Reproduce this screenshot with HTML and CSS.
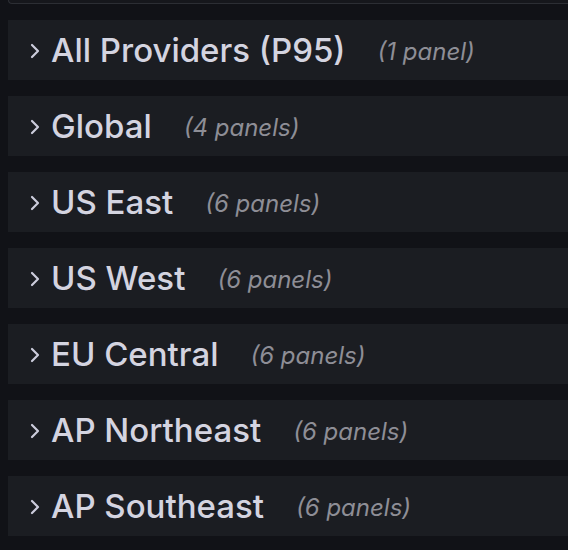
FILE: index.html
```html
<!DOCTYPE html>
<html lang="en">
<head>
  <meta charset="UTF-8">
  <title>Dashboard rows</title>
  <link rel="stylesheet" href="styles.css">
</head>
<body>
  <div class="panel-edge"></div>
  <div class="rows">
    <div class="row">
      <svg class="chevron" viewBox="0 0 10 16"><path d="M2 2 L8 8 L2 14"/></svg>
      <span class="title">All Providers (P95)</span>
      <span class="count">(1 panel)</span>
    </div>
    <div class="row">
      <svg class="chevron" viewBox="0 0 10 16"><path d="M2 2 L8 8 L2 14"/></svg>
      <span class="title">Global</span>
      <span class="count">(4 panels)</span>
    </div>
    <div class="row">
      <svg class="chevron" viewBox="0 0 10 16"><path d="M2 2 L8 8 L2 14"/></svg>
      <span class="title">US East</span>
      <span class="count">(6 panels)</span>
    </div>
    <div class="row">
      <svg class="chevron" viewBox="0 0 10 16"><path d="M2 2 L8 8 L2 14"/></svg>
      <span class="title">US West</span>
      <span class="count">(6 panels)</span>
    </div>
    <div class="row">
      <svg class="chevron" viewBox="0 0 10 16"><path d="M2 2 L8 8 L2 14"/></svg>
      <span class="title">EU Central</span>
      <span class="count">(6 panels)</span>
    </div>
    <div class="row">
      <svg class="chevron" viewBox="0 0 10 16"><path d="M2 2 L8 8 L2 14"/></svg>
      <span class="title">AP Northeast</span>
      <span class="count">(6 panels)</span>
    </div>
    <div class="row">
      <svg class="chevron" viewBox="0 0 10 16"><path d="M2 2 L8 8 L2 14"/></svg>
      <span class="title">AP Southeast</span>
      <span class="count">(6 panels)</span>
    </div>
  </div>
</body>
</html>
```

FILE: styles.css
```css
*{
  padding: 0;
  margin: 0;
  box-sizing: border-box;
}
body{
  background-color: #111217;
  font-family: Inter, "Noto Sans", sans-serif;
  overflow: hidden;
}
.panel-edge{
  height: 4px;
  margin-left: 8px;
  border: 1px solid #2c2e34;
  border-top: none;
  border-right: none;
  border-radius: 0 0 0 4px;
  background-color: #16171c;
}
.rows{
  display: flex;
  flex-direction: column;
  gap: 16px;
  padding: 16px 0 0 8px;
}
.row{
  display: flex;
  align-items: center;
  height: 60px;
  padding-left: 22px;
  background-color: #1b1d22;
}
.chevron{
  width: 10px;
  height: 16px;
  margin: 2px 11px 0 0;
  fill: none;
  stroke: #ccccdc;
  stroke-width: 2.2;
  stroke-linecap: round;
  stroke-linejoin: round;
}
.title{
  color: #d4d4e0;
  font-size: 33px;
  font-weight: 500;
}
.count{
  color: #8e8e96;
  font-size: 24px;
  font-style: italic;
  margin-left: 32px;
  padding-top: 3px;
}
```
